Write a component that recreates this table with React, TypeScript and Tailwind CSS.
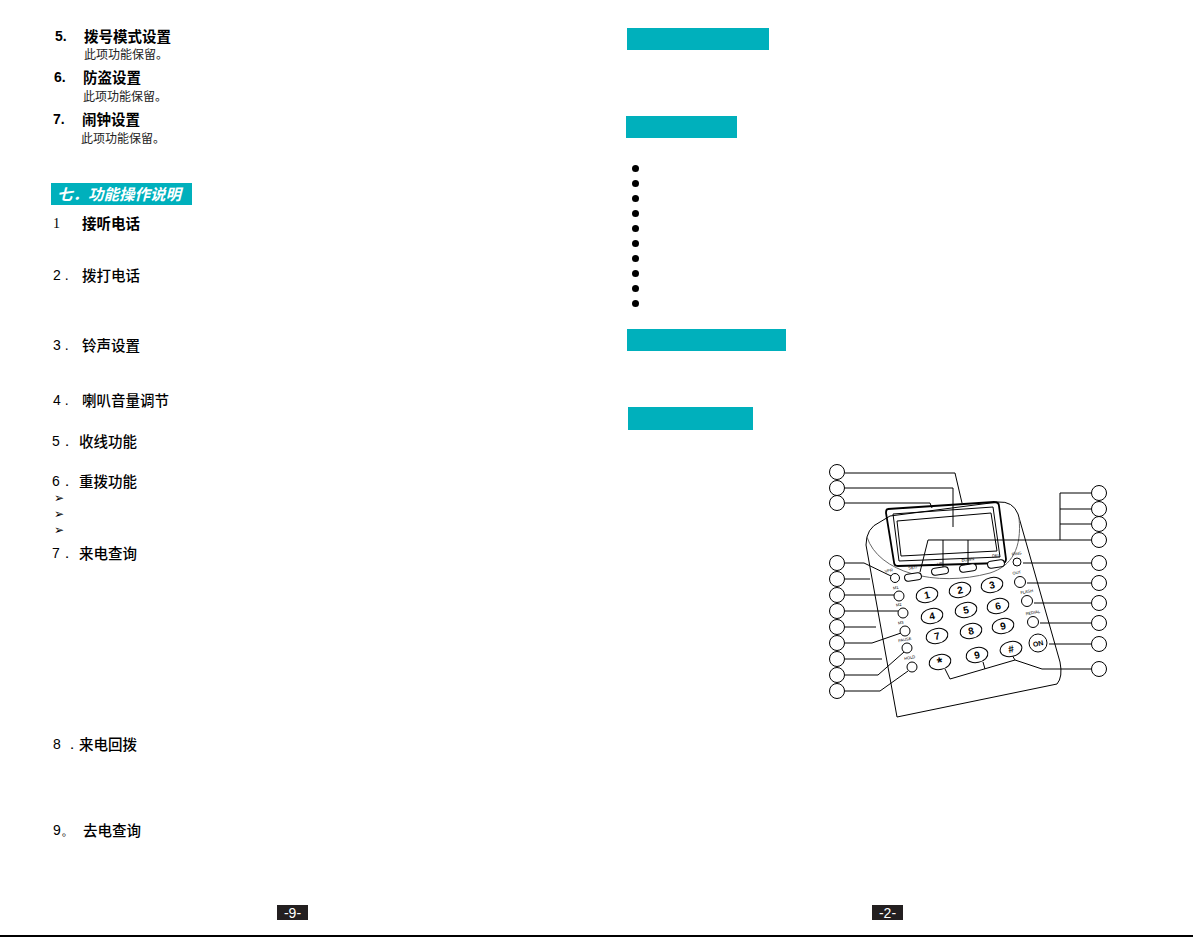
import React from "react";

const teal = "bg-[#00b0bc]";

// phone diagram: coordinates are page pixels, viewBox is offset to match
const leftCircles = [472, 488, 503, 563, 579, 595, 611, 627, 643, 659, 675, 691];
const rightCircles = [493, 509, 524, 540, 563, 583, 603, 623, 644, 669];

const leaders = [
  "M845 473 H955 L962 503",
  "M845 488 H953 V527",
  "M845 503 H930 L932 508",
  "M845 563 H864 L891 576",
  "M845 579 H870",
  "M845 595 H894",
  "M845 611 H898",
  "M845 627 H876",
  "M845 643 H872 L901 633",
  "M845 659 H882",
  "M845 675 H878 L904 652",
  "M845 691 H880 L908 671",
  // right side
  "M1091 493 H1060 V540",
  "M1091 509 H1060",
  "M1091 524 H1060",
  "M1091 540 H928 L920 572",
  "M943 540 V567",
  "M968 540 V565",
  "M1091 563 H1023",
  "M1091 583 H1027",
  "M1091 603 H1034",
  "M1091 623 H1040",
  "M1091 644 H1049",
  "M1091 669 H1042 L1015 660 L1012 655",
  "M945 669 L950 679 L1015 660",
  "M985 669 L983 662",
];

const keys = [
  { x: 927, y: 595, t: "1" },
  { x: 960, y: 590, t: "2" },
  { x: 992, y: 585, t: "3" },
  { x: 932, y: 616, t: "4" },
  { x: 966, y: 610, t: "5" },
  { x: 998, y: 606, t: "6" },
  { x: 937, y: 636, t: "7" },
  { x: 971, y: 631, t: "8" },
  { x: 1003, y: 626, t: "9" },
  { x: 940, y: 662, t: "*" },
  { x: 977, y: 655, t: "9" },
  { x: 1011, y: 649, t: "#" },
];

const softKeys = [
  { x: 913, y: 577, label: "SET/", ly: 569 },
  { x: 940, y: 571, label: "UP", ly: 565 },
  { x: 968, y: 568, label: "DOWN", ly: 561 },
  { x: 996, y: 564, label: "DEL", ly: 557 },
];

const smallButtons = [
  { x: 895, y: 578, r: 4.5, label: "VPR", lx: 889, ly: 572 },
  { x: 899, y: 596, r: 5, label: "M1", lx: 896, ly: 589 },
  { x: 903, y: 613, r: 5, label: "M2", lx: 899, ly: 606 },
  { x: 905, y: 631, r: 5, label: "M3", lx: 901, ly: 624 },
  { x: 907, y: 648, r: 5, label: "PAUSE", lx: 905, ly: 641 },
  { x: 912, y: 667, r: 5, label: "HOLD", lx: 910, ly: 659 },
  { x: 1017, y: 562, r: 4, label: "RING", lx: 1017, ly: 555 },
  { x: 1020, y: 582, r: 5.5, label: "OUT", lx: 1017, ly: 574 },
  { x: 1027, y: 601, r: 5.5, label: "FLASH", lx: 1027, ly: 593 },
  { x: 1033, y: 622, r: 5.5, label: "REDIAL", lx: 1033, ly: 614 },
];

function PhoneDiagram() {
  return (
    <svg width={290} height={262} viewBox="820 460 290 262" className="ml-[224px] mt-[30px] block">
      <g fill="none" stroke="#000" strokeWidth={1}>
        {/* body */}
        <path d="M866 545 Q866 528 880 522 L890 516 L998 502 Q1013 501 1018 514 L1060 662 Q1063 677 1057 684 L897 717 Z" />
        {/* display housing */}
        <path d="M867 537 C878 572 935 588 990 573 C1012 566 1022 548 1019 518" stroke="#666" />
        {/* display */}
        <path d="M888 509 L994 502 Q999 502 999 506 L1006 559 Q1006 563 1002 563 L898 566 Q894 566 894 562 L886 513 Q886 509 888 509 Z" strokeWidth={1.8} />
        <path d="M893 514 L993 507 L1000 557 L899 561 Z" />
        <path d="M897 521 L991 513 L997 551 L901 556 Z" />
        {leaders.map((d, i) => (
          <path key={i} d={d} />
        ))}
        {leftCircles.map((y) => (
          <circle key={`l${y}`} cx={837} cy={y} r={7.5} fill="#fff" />
        ))}
        {rightCircles.map((y) => (
          <circle key={`r${y}`} cx={1099} cy={y} r={7.5} fill="#fff" />
        ))}
        {softKeys.map((k) => (
          <rect
            key={k.label}
            x={k.x - 8.5}
            y={k.y - 3.5}
            width={17}
            height={7}
            rx={3.5}
            fill="#fff"
            transform={`rotate(-8 ${k.x} ${k.y})`}
          />
        ))}
        {smallButtons.map((b) => (
          <circle key={b.label} cx={b.x} cy={b.y} r={b.r} fill="#fff" />
        ))}
        <circle cx={1038} cy={643} r={9} fill="#fff" />
        {keys.map((k, i) => (
          <ellipse
            key={i}
            cx={k.x}
            cy={k.y}
            rx={11}
            ry={7.5}
            fill="#fff"
            transform={`rotate(-12 ${k.x} ${k.y})`}
          />
        ))}
      </g>
      <g fontFamily="Liberation Sans, Arial, sans-serif" fill="#000" textAnchor="middle">
        {softKeys.map((k) => (
          <text key={k.label} x={k.x} y={k.ly} fontSize={4} transform={`rotate(-8 ${k.x} ${k.ly})`}>
            {k.label}
          </text>
        ))}
        {smallButtons.map((b) => (
          <text key={b.label} x={b.lx} y={b.ly} fontSize={4} transform={`rotate(-10 ${b.lx} ${b.ly})`}>
            {b.label}
          </text>
        ))}
        <text x={1038} y={646} fontSize={7} fontWeight="bold" transform="rotate(-12 1038 643)">
          ON
        </text>
        {keys.map((k, i) => (
          <text
            key={i}
            x={k.x}
            y={k.y + (k.t === "*" ? 5 : 3.5)}
            fontSize={k.t === "*" ? 14 : 10}
            fontWeight="bold"
            transform={`rotate(-12 ${k.x} ${k.y})`}
          >
            {k.t}
          </text>
        ))}
      </g>
    </svg>
  );
}

function Heading({
  num,
  title,
  className,
  numClass,
  titleClass,
}: {
  num: string;
  title: string;
  className: string;
  numClass: string;
  titleClass?: string;
}) {
  return (
    <div className={`flex h-[18px] items-center ${className}`}>
      <span className={`shrink-0 font-['Liberation_Sans',sans-serif] text-[14px] ${numClass}`}>{num}</span>
      <span className={`font-['Noto_Sans_CJK_SC',sans-serif] text-[14.5px] text-black ${titleClass ?? "font-medium"}`}>
        {title}
      </span>
    </div>
  );
}

function Note({ className }: { className: string }) {
  return (
    <div className={`flex h-[18px] items-center font-['Noto_Sans_CJK_SC',sans-serif] text-[12px] text-[#222] ${className}`}>
      此项功能保留。
    </div>
  );
}

function PageNumber({ text, className }: { text: string; className: string }) {
  return (
    <div
      className={`flex h-[15px] w-[31px] items-center justify-center bg-[#231f20] font-['Liberation_Sans',sans-serif] text-[14px] leading-none text-white ${className}`}
    >
      {text}
    </div>
  );
}

export default function App() {
  return (
    <div className="flex h-[937px] w-[1193px] flex-col overflow-hidden bg-white text-black">
      <div className="flex flex-1">
        {/* left page (-9-) */}
        <div className="flex w-[596px] flex-col">
          <Heading className="mt-[27px]" num="5." numClass="w-[84px] pl-[55px] font-bold" title="拨号模式设置" titleClass="font-bold" />
          <Note className="pl-[84px]" />
          <Heading className="mt-[5px]" num="6." numClass="w-[83px] pl-[54px] font-bold" title="防盗设置" titleClass="font-bold" />
          <Note className="mt-[1px] pl-[83px]" />
          <Heading className="mt-[5px]" num="7." numClass="w-[82px] pl-[53px] font-bold" title="闹钟设置" titleClass="font-bold" />
          <Note className="mt-[1px] pl-[81px]" />

          <div
            className={`ml-[51px] mt-[36px] flex h-[22px] w-[141px] items-center pl-[6px] ${teal} font-['Noto_Sans_CJK_SC',sans-serif] text-[15.5px] font-bold italic text-white`}
          >
            七．功能操作说明
          </div>

          <Heading className="mt-[9px]" num="1" numClass="w-[82px] pl-[53px] font-['Liberation_Serif',serif]" title="接听电话" titleClass="font-bold" />
          <Heading className="mt-[34px]" num="2 ." numClass="w-[82px] pl-[53px]" title="拨打电话" />
          <Heading className="mt-[52px]" num="3 ." numClass="w-[82px] pl-[53px]" title="铃声设置" />
          <Heading className="mt-[37px]" num="4 ." numClass="w-[82px] pl-[53px]" title="喇叭音量调节" />
          <Heading className="mt-[23px]" num="5．" numClass="w-[79px] pl-[52px]" title="收线功能" />
          <Heading className="mt-[22px]" num="6．" numClass="w-[79px] pl-[52px]" title="重拨功能" />
          <div className="flex flex-col">
            {[0, 1, 2].map((i) => (
              <div key={i} className="flex h-[16px] items-center pl-[54px] font-['DejaVu_Sans',sans-serif] text-[12px]">
                ➢
              </div>
            ))}
          </div>
          <Heading className="mt-[6px]" num="7．" numClass="w-[79px] pl-[52px]" title="来电查询" />
          <Heading className="mt-[173px]" num="8 ．" numClass="w-[79px] pl-[53px]" title="来电回拨" />
          <Heading className="mt-[68px]" num="9。" numClass="w-[83px] pl-[53px]" title="去电查询" />

          <PageNumber text="-9-" className="ml-[277px] mt-[66px]" />
        </div>

        {/* right page (-2-) */}
        <div className="flex flex-1 flex-col">
          <div className={`ml-[31px] mt-[28px] h-[22px] w-[142px] ${teal}`} />
          <div className={`ml-[30px] mt-[66px] h-[22px] w-[111px] ${teal}`} />
          <div className="mt-[23px] flex flex-col">
            {Array.from({ length: 10 }).map((_, i) => (
              <div key={i} className="flex h-[15px] items-center pl-[36px]">
                <span className="h-[7px] w-[7px] rounded-full bg-black" />
              </div>
            ))}
          </div>
          <div className={`ml-[31px] mt-[18px] h-[22px] w-[159px] ${teal}`} />
          <div className={`ml-[32px] mt-[56px] h-[23px] w-[125px] ${teal}`} />

          <PhoneDiagram />

          <PageNumber text="-2-" className="ml-[276px] mt-[183px]" />
        </div>
      </div>
      <div className="h-[2px] bg-black" />
    </div>
  );
}
